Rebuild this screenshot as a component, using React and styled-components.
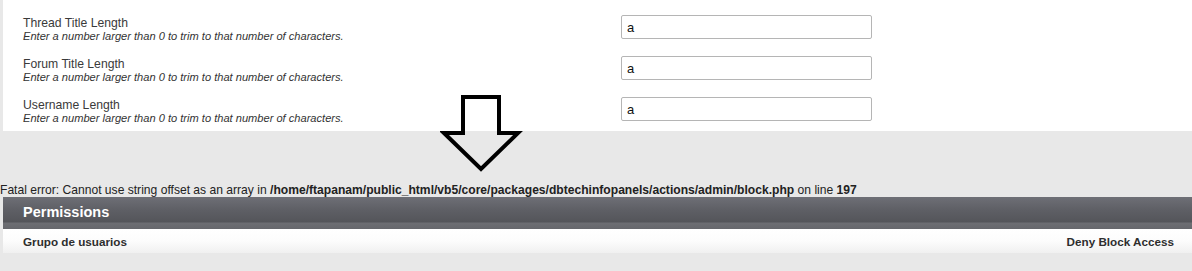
import React from "react";
import styled, { createGlobalStyle } from "styled-components";

const Global = createGlobalStyle`
  html, body { margin: 0; padding: 0; }
  body {
    background: #e8e8e8;
    font-family: "Liberation Sans", Arial, sans-serif;
    color: #333;
    width: 1192px;
    height: 271px;
    overflow: hidden;
  }
`;

const Page = styled.div`
  position: relative;
  display: flex;
  flex-direction: column;
`;

const Panel = styled.div`
  margin-left: 3px;
  background: #fff;
  height: 131px;
  box-sizing: border-box;
  padding-top: 15px;
  display: flex;
  flex-direction: column;
  gap: 17px;
`;

const OptionRow = styled.div`
  display: grid;
  grid-template-columns: 618px 251px;
  height: 24px;
`;

const LabelCell = styled.div`
  padding-left: 20px;
  display: flex;
  flex-direction: column;
`;

const Label = styled.div`
  font-size: 12.2px;
  line-height: 14px;
  color: #3a3a3a;
  margin-top: 1px;
`;

const Hint = styled.div`
  font-size: 11.1px;
  line-height: 13px;
  font-style: italic;
  color: #333;
`;

const Input = styled.input`
  box-sizing: border-box;
  width: 251px;
  height: 24px;
  border: 1px solid #b5b5b5;
  border-radius: 2px;
  padding: 0 5px;
  font-family: "Liberation Sans", Arial, sans-serif;
  font-size: 13px;
  color: #111;
  background: #fff;
  outline: none;
`;

const ErrorLine = styled.div`
  margin-top: 52px;
  font-size: 12.1px;
  line-height: 14px;
  color: #222;
  white-space: nowrap;
`;

const Bold = styled.b`
  font-weight: bold;
`;

const SectionHeader = styled.div`
  margin-left: 3px;
  height: 32px;
  box-sizing: border-box;
  background: linear-gradient(
    to bottom,
    #6e6f76 0px,
    #5e5f65 13px,
    #54555a 25px,
    #6d6e73 26px,
    #66676c 32px
  );
  display: flex;
  align-items: center;
  padding: 0 20px 2px;
  color: #fff;
  font-weight: bold;
  font-size: 14.5px;
`;

const HeadRow = styled.div`
  margin-left: 3px;
  height: 24px;
  background: linear-gradient(to bottom, #ffffff 0%, #fcfcfc 50%, #f0f0f0 100%);
  display: flex;
  align-items: center;
  justify-content: space-between;
  padding: 0 18px 0 20px;
  font-size: 11.7px;
  font-weight: bold;
  color: #2e2e2e;
`;

const Arrow = styled.svg`
  position: absolute;
  left: 440px;
  top: 93px;
`;

const options = ["Thread Title Length", "Forum Title Length", "Username Length"];

export default function App() {
  return (
    <Page>
      <Global />
      <Panel>
        {options.map((o) => (
          <OptionRow key={o}>
            <LabelCell>
              <Label>{o}</Label>
              <Hint>Enter a number larger than 0 to trim to that number of characters.</Hint>
            </LabelCell>
            <Input defaultValue="a" />
          </OptionRow>
        ))}
      </Panel>
      <ErrorLine>
        Fatal error: Cannot use string offset as an array in{" "}
        <Bold>/home/ftapanam/public_html/vb5/core/packages/dbtechinfopanels/actions/admin/block.php</Bold> on line{" "}
        <Bold>197</Bold>
      </ErrorLine>
      <SectionHeader>Permissions</SectionHeader>
      <HeadRow>
        <span>Grupo de usuarios</span>
        <span>Deny Block Access</span>
      </HeadRow>
      <Arrow width="84" height="82" viewBox="0 0 84 82">
        <path
          d="M23 4 L59 4 L59 40 L78 40 L41 76 L4 40 L23 40 Z"
          fill="none"
          stroke="#000"
          strokeWidth="4"
          strokeLinejoin="miter"
        />
      </Arrow>
    </Page>
  );
}
